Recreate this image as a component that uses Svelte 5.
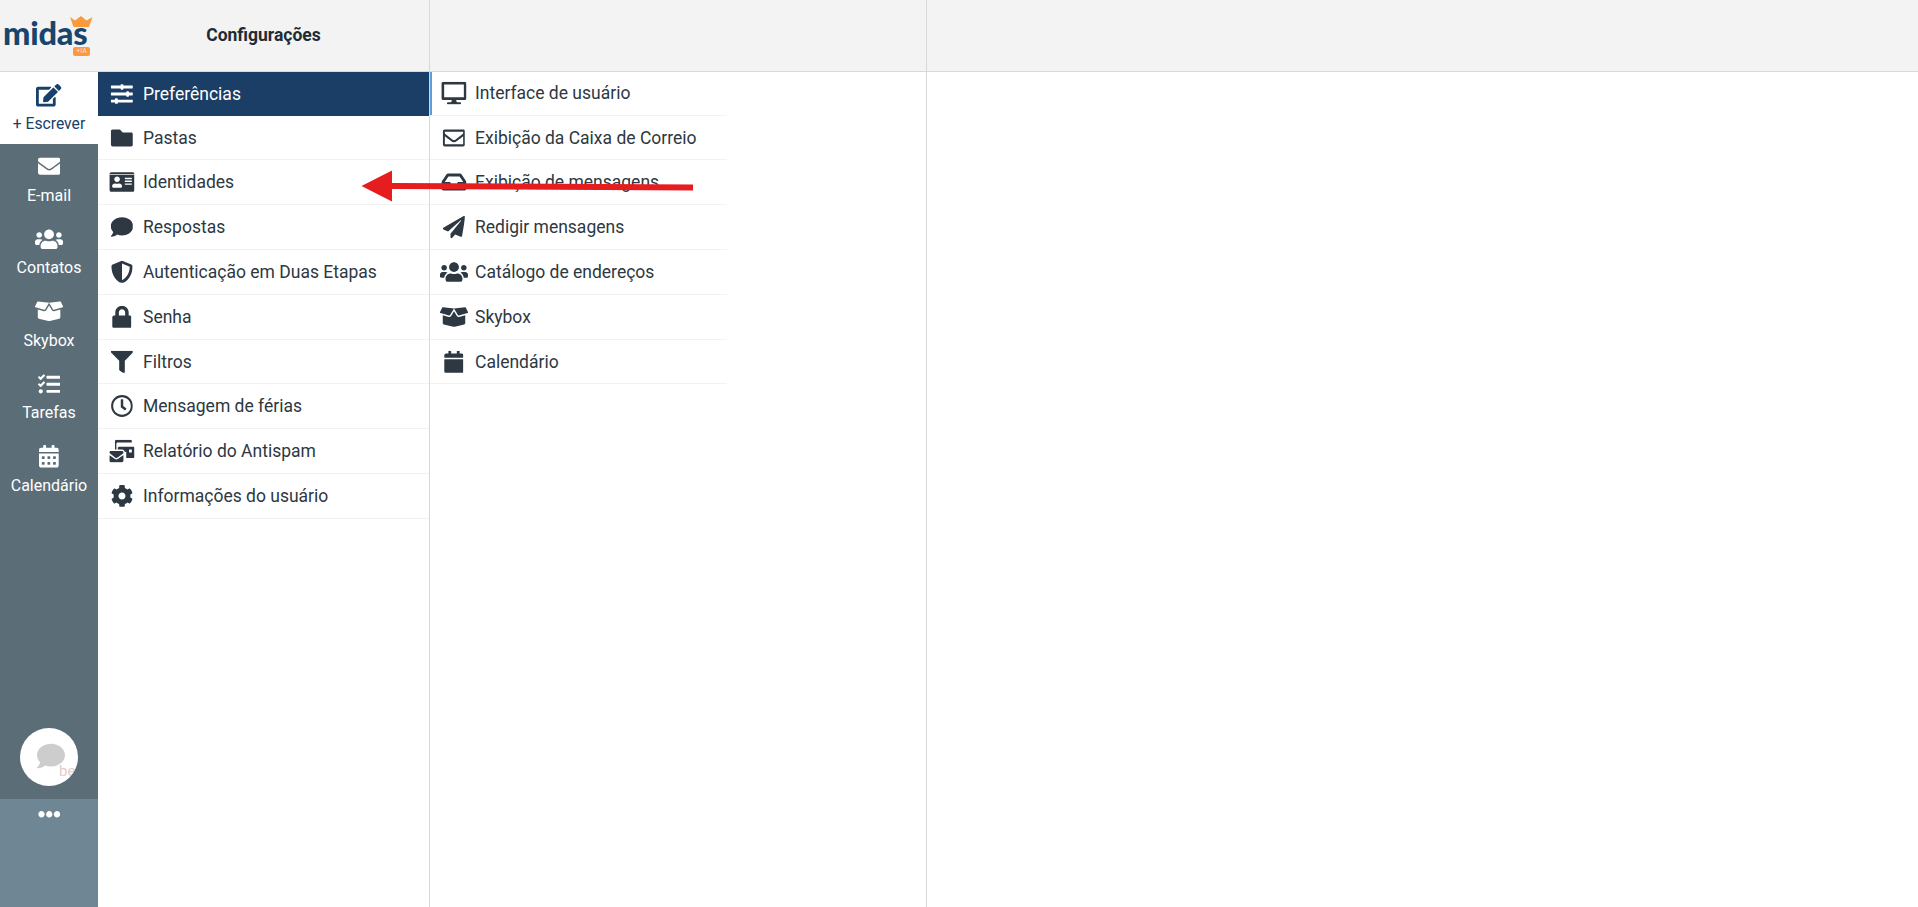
<script>
  const P = {
    sliders: [512, "M496 384H160v-16c0-8.8-7.2-16-16-16h-32c-8.800 0-16 7.200-16 16v16H16c-8.800 0-16 7.200-16 16v32c0 8.800 7.200 16 16 16h80v16c0 8.800 7.200 16 16 16h32c8.800 0 16-7.200 16-16v-16h336c8.800 0 16-7.200 16-16v-32c0-8.800-7.200-16-16-16zm0-160h-80v-16c0-8.800-7.200-16-16-16h-32c-8.800 0-16 7.200-16 16v16H16c-8.800 0-16 7.200-16 16v32c0 8.800 7.200 16 16 16h336v16c0 8.800 7.200 16 16 16h32c8.800 0 16-7.200 16-16v-16h80c8.800 0 16-7.200 16-16v-32c0-8.800-7.200-16-16-16zm0-160H288V48c0-8.800-7.200-16-16-16h-32c-8.800 0-16 7.200-16 16v16H16C7.200 64 0 71.200 0 80v32c0 8.800 7.200 16 16 16h208v16c0 8.800 7.200 16 16 16h32c8.800 0 16-7.200 16-16v-16h208c8.800 0 16-7.200 16-16V80c0-8.800-7.200-16-16-16z"],
    folder: [512, "M464 128H272l-64-64H48C21.490 64 0 85.490 0 112v288c0 26.510 21.490 48 48 48h416c26.510 0 48-21.490 48-48V176c0-26.510-21.490-48-48-48z"],
    idcard: [576, "M528 32H48C21.500 32 0 53.500 0 80v352c0 26.500 21.500 48 48 48h480c26.500 0 48-21.500 48-48V80c0-26.500-21.500-48-48-48zm-352 96c35.300 0 64 28.700 64 64s-28.700 64-64 64-64-28.700-64-64 28.700-64 64-64zm112 236.800c0 10.600-10 19.200-22.400 19.200H86.400C74 384 64 375.400 64 364.800v-19.200c0-31.800 30.100-57.600 67.200-57.600h5c12.300 5.100 25.700 8 39.800 8s27.600-2.900 39.800-8h5c37.100 0 67.200 25.800 67.200 57.600v19.200zM512 312c0 4.400-3.600 8-8 8H360c-4.400 0-8-3.600-8-8v-16c0-4.400 3.600-8 8-8h144c4.400 0 8 3.600 8 8v16zm0-64c0 4.400-3.600 8-8 8H360c-4.400 0-8-3.600-8-8v-16c0-4.400 3.600-8 8-8h144c4.400 0 8 3.600 8 8v16zm0-64c0 4.400-3.600 8-8 8H360c-4.400 0-8-3.600-8-8v-16c0-4.400 3.600-8 8-8h144c4.400 0 8 3.600 8 8v16z"],
    comment: [512, "M256 32C114.600 32 0 125.100 0 240c0 49.600 21.400 95 57 130.700C44.500 421.100 2.700 466 2.200 466.500c-2.200 2.300-2.800 5.700-1.500 8.700S4.800 480 8 480c66.300 0 116-31.800 140.600-51.400 32.700 12.300 69 19.400 107.400 19.400 141.400 0 256-93.100 256-208S397.400 32 256 32z"],
    shield: [512, "M466.500 83.700l-192-80a48.150 48.150 0 0 0-36.900 0l-192 80C27.700 91.100 16 108.600 16 128c0 198.500 114.500 335.700 221.500 380.300 11.800 4.900 25.100 4.900 36.900 0C360.100 472.600 496 349.300 496 128c0-19.400-11.700-36.900-29.500-44.300zM256.100 446.300l-.1-381 175.900 73.300c-3.300 151.400-82.100 261.100-175.800 307.700z"],
    lock: [448, "M400 224h-24v-72C376 68.200 307.800 0 224 0S72 68.200 72 152v72H48c-26.500 0-48 21.500-48 48v192c0 26.500 21.500 48 48 48h352c26.500 0 48-21.500 48-48V272c0-26.500-21.500-48-48-48zm-104 0H152v-72c0-39.700 32.300-72 72-72s72 32.300 72 72v72z"],
    filter: [512, "M487.976 0H24.028C2.710 0-8.047 25.866 7.058 40.971L192 225.941V432c0 7.831 3.821 15.170 10.237 19.662l80 55.980C298.020 518.690 320 507.493 320 487.980V225.941l184.947-184.970C520.021 25.896 509.338 0 487.976 0z"],
    clock: [512, "M256 8C119 8 8 119 8 256s111 248 248 248 248-111 248-248S393 8 256 8zm0 448c-110.500 0-200-89.500-200-200S145.500 56 256 56s200 89.500 200 200-89.500 200-200 200zm61.800-104.400l-84.900-61.700c-3.100-2.300-4.900-5.900-4.900-9.700V116c0-6.600 5.400-12 12-12h32c6.600 0 12 5.400 12 12v141.700l66.800 48.600c5.400 3.900 6.500 11.400 2.600 16.800L334.600 349c-3.900 5.300-11.400 6.500-16.800 2.600z"],
    mail: [576, "M160 448c-25.600 0-51.200-22.400-64-32-64-44.800-83.200-60.800-96-70.400V480c0 17.700 14.300 32 32 32h256c17.700 0 32-14.300 32-32V345.600c-12.800 9.600-32 25.600-96 70.400-12.800 9.600-38.400 32-64 32zm128-192H32c-17.700 0-32 14.300-32 32v16c25.600 19.200 22.400 19.200 115.200 86.400 9.600 6.400 28.800 25.600 44.800 25.600s35.200-19.200 44.800-22.400c92.800-67.200 89.600-67.200 115.200-86.400V288c0-17.700-14.300-32-32-32zm256-96H224c-17.700 0-32 14.300-32 32v32h96c33.300 0 60.700 25.700 63.700 58.300L384 269.800V416h160c17.700 0 32-14.300 32-32V192c0-17.700-14.300-32-32-32zm-32 128h-64v-64h64v64zM160 96c0-17.700 14.300-32 32-32h320V32c0-17.700-14.300-32-32-32H160c-17.700 0-32 14.300-32 32v192h32V96z"],
    cog: [512, "M487.400 315.700l-42.600-24.600c4.300-23.200 4.300-47 0-70.200l42.600-24.600c4.900-2.800 7.100-8.600 5.500-14-11.100-35.600-30-67.800-54.700-94.600-3.800-4.100-10-5.100-14.800-2.300L380.800 110c-17.900-15.400-38.500-27.300-60.800-35.100V25.800c0-5.600-3.900-10.500-9.400-11.700-36.700-8.200-74.300-7.800-109.200 0-5.500 1.200-9.400 6.100-9.400 11.700V75c-22.200 7.900-42.800 19.800-60.800 35.100L88.700 85.500c-4.900-2.800-11-1.900-14.800 2.300-24.700 26.700-43.600 58.900-54.700 94.600-1.700 5.400.6 11.200 5.500 14L67.300 221c-4.300 23.200-4.300 47 0 70.200l-42.600 24.600c-4.900 2.800-7.100 8.600-5.500 14 11.100 35.600 30 67.800 54.700 94.600 3.800 4.100 10 5.100 14.800 2.300l42.600-24.600c17.900 15.400 38.500 27.300 60.800 35.100v49.200c0 5.600 3.900 10.500 9.400 11.700 36.700 8.200 74.300 7.800 109.200 0 5.500-1.200 9.400-6.100 9.400-11.700v-49.200c22.200-7.900 42.800-19.800 60.800-35.100l42.600 24.600c4.900 2.800 11 1.900 14.800-2.300 24.700-26.700 43.600-58.900 54.700-94.600 1.500-5.500-.7-11.300-5.600-14.100zM256 336c-44.100 0-80-35.900-80-80s35.900-80 80-80 80 35.900 80 80-35.900 80-80 80z"],
    desktop: [576, "M528 0H48C21.500 0 0 21.500 0 48v320c0 26.500 21.500 48 48 48h192l-16 48h-72c-13.300 0-24 10.700-24 24s10.700 24 24 24h272c13.300 0 24-10.700 24-24s-10.700-24-24-24h-72l-16-48h192c26.500 0 48-21.500 48-48V48c0-26.500-21.500-48-48-48zm-16 352H64V64h448v288z"],
    envO: [512, "M464 64H48C21.490 64 0 85.490 0 112v288c0 26.510 21.490 48 48 48h416c26.510 0 48-21.490 48-48V112c0-26.510-21.490-48-48-48zm0 48v40.805c-22.422 18.259-58.168 46.651-134.587 106.490-16.841 13.247-50.201 45.072-73.413 44.701-23.208.375-56.579-31.459-73.413-44.701C106.180 199.465 70.425 171.067 48 152.805V112h416zM48 400V214.398c22.914 18.251 55.409 43.862 104.938 82.646 21.857 17.205 60.134 55.186 103.062 54.955 42.717.231 80.509-37.199 103.053-54.947 49.528-38.783 82.032-64.401 104.947-82.653V400H48z"],
    env: [512, "M502.300 190.800c3.900-3.100 9.700-.2 9.700 4.700V400c0 26.500-21.500 48-48 48H48c-26.500 0-48-21.500-48-48V195.600c0-5 5.700-7.800 9.700-4.700 22.400 17.400 52.100 39.500 154.100 113.600 21.100 15.400 56.700 47.800 92.200 47.600 35.700.3 72-32.800 92.300-47.600 102-74.100 131.600-96.300 154-113.700zM256 320c23.200.4 56.600-29.200 73.400-41.400 132.700-96.300 142.800-104.700 173.400-128.700 5.800-4.500 9.200-11.500 9.200-18.900v-19c0-26.500-21.500-48-48-48H48C21.500 64 0 85.500 0 112v19c0 7.400 3.400 14.300 9.200 18.900 30.600 23.900 40.700 32.400 173.400 128.700 16.800 12.200 50.200 41.800 73.400 41.400z"],
    inbox: [576, "M567.938 243.908L462.250 85.374A48.003 48.003 0 0 0 422.311 64H153.689a48 48 0 0 0-39.938 21.374L8.062 243.908A47.994 47.994 0 0 0 0 270.533V400c0 26.510 21.490 48 48 48h480c26.510 0 48-21.490 48-48V270.533a47.994 47.994 0 0 0-8.062-26.625zM162.252 128h251.497l85.333 128H376l-32 64H232l-32-64H76.918l85.334-128z"],
    plane: [512, "M476 3.200L12.500 270.600c-18.100 10.400-15.800 35.600 2.200 43.200L121 358.400l287.300-253.200c5.500-4.900 13.300 2.600 8.600 8.300L176 407v80.500c0 23.600 28.500 32.900 42.500 15.800L282 426l124.600 52.200c14.200 6 30.400-2.900 33-18.200l72-432C515 7.800 493.300-6.800 476 3.200z"],
    users: [640, "M96 224c35.300 0 64-28.700 64-64s-28.700-64-64-64-64 28.700-64 64 28.700 64 64 64zm448 0c35.300 0 64-28.700 64-64s-28.700-64-64-64-64 28.700-64 64 28.700 64 64 64zm32 32h-64c-17.600 0-33.500 7.100-45.100 18.600 40.300 22.100 68.900 62 75.100 109.400h66c17.700 0 32-14.300 32-32v-32c0-35.300-28.700-64-64-64zm-256 0c61.900 0 112-50.100 112-112S381.900 32 320 32 208 82.100 208 144s50.100 112 112 112zm76.800 32h-8.300c-20.800 10-43.900 16-68.500 16s-47.600-6-68.500-16h-8.300C179.600 288 128 339.600 128 403.200V432c0 26.500 21.500 48 48 48h288c26.500 0 48-21.500 48-48v-28.800c0-63.600-51.600-115.200-115.200-115.200zm-223.700-13.400C161.500 263.100 145.600 256 128 256H64c-35.300 0-64 28.700-64 64v32c0 17.700 14.300 32 32 32h65.900c6.300-47.400 34.900-87.300 75.200-109.400z"],
    box: [640, "M425.700 256c-16.900 0-32.800-9-41.400-23.400L320 126l-64.200 106.600c-8.700 14.500-24.600 23.500-41.500 23.500-4.500 0-9-.6-13.300-1.900L64 215v178c0 14.700 10 27.500 24.200 31l216.200 54.100c10.200 2.500 20.900 2.500 31 0L551.800 424c14.200-3.600 24.200-16.400 24.200-31V215l-137 39.100c-4.300 1.300-8.800 1.900-13.300 1.900zm212.600-112.200L586.800 41c-3.100-6.200-9.800-9.800-16.700-8.900L320 64l91.700 152.100c3.800 6.300 11.400 9.300 18.500 7.300l197.900-56.500c9.900-2.900 14.700-13.900 10.200-23.100zM53.200 41L1.700 143.800c-4.600 9.200.3 20.200 10.100 23l197.900 56.500c7.100 2 14.700-1 18.500-7.300L320 64 69.800 32.100c-6.900-.8-13.500 2.700-16.600 8.900z"],
    cal: [448, "M12 192h424c6.600 0 12 5.400 12 12v260c0 26.500-21.500 48-48 48H48c-26.500 0-48-21.500-48-48V204c0-6.600 5.400-12 12-12zm436-44v-36c0-26.500-21.500-48-48-48h-48V12c0-6.600-5.400-12-12-12h-40c-6.600 0-12 5.400-12 12v52H160V12c0-6.600-5.400-12-12-12h-40c-6.600 0-12 5.400-12 12v52H48C21.500 64 0 85.500 0 112v36c0 6.600 5.400 12 12 12h424c6.600 0 12-5.400 12-12z"],
    calAlt: [448, "M0 464c0 26.500 21.500 48 48 48h352c26.500 0 48-21.500 48-48V192H0v272zm320-196c0-6.600 5.400-12 12-12h40c6.600 0 12 5.400 12 12v40c0 6.600-5.400 12-12 12h-40c-6.600 0-12-5.400-12-12v-40zm0 128c0-6.600 5.400-12 12-12h40c6.600 0 12 5.400 12 12v40c0 6.600-5.400 12-12 12h-40c-6.600 0-12-5.400-12-12v-40zM192 268c0-6.600 5.400-12 12-12h40c6.600 0 12 5.400 12 12v40c0 6.600-5.400 12-12 12h-40c-6.600 0-12-5.400-12-12v-40zm0 128c0-6.600 5.400-12 12-12h40c6.600 0 12 5.400 12 12v40c0 6.600-5.400 12-12 12h-40c-6.600 0-12-5.400-12-12v-40zM64 268c0-6.600 5.400-12 12-12h40c6.600 0 12 5.400 12 12v40c0 6.600-5.400 12-12 12H76c-6.600 0-12-5.400-12-12v-40zm0 128c0-6.600 5.400-12 12-12h40c6.600 0 12 5.400 12 12v40c0 6.600-5.400 12-12 12H76c-6.600 0-12-5.400-12-12v-40zM400 64h-48V16c0-8.800-7.200-16-16-16h-32c-8.800 0-16 7.200-16 16v48H160V16c0-8.800-7.200-16-16-16h-32c-8.800 0-16 7.200-16 16v48H48C21.500 64 0 85.500 0 112v48h448v-48c0-26.500-21.500-48-48-48z"],
    edit: [576, "M402.600 83.200l90.200 90.200c3.800 3.800 3.800 10 0 13.800L274.400 405.600l-92.800 10.300c-12.400 1.400-22.900-9.100-21.500-21.500l10.300-92.800L388.800 83.200c3.800-3.800 10-3.800 13.800 0zm162-22.900l-48.800-48.800c-15.200-15.200-39.900-15.200-55.200 0l-35.400 35.400c-3.800 3.800-3.800 10 0 13.800l90.200 90.200c3.800 3.800 10 3.800 13.800 0l35.400-35.400c15.200-15.300 15.200-40 0-55.200zM384 346.200V448H64V128h229.800c3.200 0 6.200-1.300 8.500-3.500l40-40c7.600-7.600 2.200-20.500-8.500-20.500H48C21.500 64 0 85.500 0 112v352c0 26.500 21.500 48 48 48h352c26.500 0 48-21.500 48-48V306.200c0-10.700-12.900-16-20.500-8.500l-40 40c-2.200 2.300-3.500 5.300-3.500 8.500z"],
    tasks: [512, "M139.610 35.500a12 12 0 0 0-17 0L58.930 98.810l-22.700-22.120a12 12 0 0 0-17 0L3.530 92.410a12 12 0 0 0 0 17l47.590 47.400a12.780 12.780 0 0 0 17.610 0l15.590-15.620L156.520 69a12.090 12.090 0 0 0 .09-17zm0 159.190a12 12 0 0 0-17 0l-63.680 63.720-22.700-22.100a12 12 0 0 0-17 0L3.530 252a12 12 0 0 0 0 17L51 316.500a12.770 12.770 0 0 0 17.600 0l15.700-15.690 72.200-72.220a12 12 0 0 0 .09-16.900zM64 368c-26.490 0-48.590 21.500-48.590 48S37.530 464 64 464a48 48 0 0 0 0-96zm432 16H208a16 16 0 0 0-16 16v32a16 16 0 0 0 16 16h288a16 16 0 0 0 16-16v-32a16 16 0 0 0-16-16zm0-320H208a16 16 0 0 0-16 16v32a16 16 0 0 0 16 16h288a16 16 0 0 0 16-16V80a16 16 0 0 0-16-16zm0 160H208a16 16 0 0 0-16 16v32a16 16 0 0 0 16 16h288a16 16 0 0 0 16-16v-32a16 16 0 0 0-16-16z"],
    dots: [512, "M328 256c0 39.800-32.200 72-72 72s-72-32.200-72-72 32.200-72 72-72 72 32.200 72 72zm104-72c-39.800 0-72 32.200-72 72s32.200 72 72 72 72-32.200 72-72-32.200-72-72-72zm-352 0c-39.800 0-72 32.200-72 72s32.200 72 72 72 72-32.200 72-72-32.200-72-72-72z"]
  };
  const side = [["env","E-mail"],["users","Contatos"],["box","Skybox"],["tasks","Tarefas"],["calAlt","Calendário"]];
  const col2 = [["sliders","Preferências"],["folder","Pastas"],["idcard","Identidades"],["comment","Respostas"],["shield","Autenticação em Duas Etapas"],["lock","Senha"],["filter","Filtros"],["clock","Mensagem de férias"],["mail","Relatório do Antispam"],["cog","Informações do usuário"]];
  const col3 = [["desktop","Interface de usuário"],["envO","Exibição da Caixa de Correio"],["inbox","Exibição de mensagens"],["plane","Redigir mensagens"],["users","Catálogo de endereços"],["box","Skybox"],["cal","Calendário"]];
</script>

{#snippet icon(n)}
  <svg class="ic" viewBox="0 0 {P[n][0]} 512" style="width:{P[n][0] / 512 * 22.5}px"><path d={P[n][1]} />{#if n === "idcard"}<rect x="0" y="80" width="576" height="16" fill="#fff" />{/if}</svg>
{/snippet}

<div class="page">
  <header class="top">
    <div class="logo">
      <span class="word">midas</span>
      <svg class="crown" viewBox="0 0 24 12"><path d="M1 1l5 3.500L12 0l5.500 4.500L23.500 1 20 11H4.500z" fill="#fb9a3c" /></svg>
      <span class="tag">+IA</span>
    </div>
    <div class="title">Configurações</div>
    <div class="hcol"></div>
    <div class="hrest"></div>
  </header>
  <div class="main">
    <nav class="side">
      <div class="compose">
        <svg class="ic" viewBox="0 0 576 512" style="width:25.300px"><path d={P.edit[1]} /></svg>
        <span>+ Escrever</span>
      </div>
      <div class="dark">
        {#each side as [n, t]}
          <div class="sitem">{@render icon(n)}<span>{t}</span></div>
        {/each}
        <div class="spacer"></div>
        <div class="chat">
          <svg viewBox="0 0 512 512"><path d={P.comment[1]} /></svg>
          <span>bet</span>
        </div>
      </div>
      <div class="more">{@render icon("dots")}</div>
    </nav>
    <section class="col2">
      {#each col2 as [n, t], i}
        <div class="row" class:active={i === 0}>{@render icon(n)}<span>{t}</span></div>
      {/each}
    </section>
    <section class="col3">
      {#each col3 as [n, t], i}
        <div class="row" class:cur={i === 0}>{@render icon(n)}<span>{t}</span></div>
      {/each}
    </section>
    <div class="rest"></div>
  </div>
  <svg class="arrow" viewBox="0 0 340 34"><path d="M0.500 16 L31 .5 V13 L332 14.500 V20.500 L31 19 V31.500z" fill="#e61c1f" /></svg>
</div>

<style>
  :global(body) { margin: 0; background: #fff; }
  .page { position: relative; height: 907px; overflow: hidden; display: flex; flex-direction: column; font-family: Roboto, sans-serif; color: #2d3842; }
  .top { height: 72px; box-sizing: border-box; display: flex; background: #f3f3f3; border-bottom: 1px solid #d8d8d8; flex: none; }
  .logo { position: relative; width: 98px; flex: none; }
  .word { position: absolute; left: 3px; top: 20px; font: 900 32.5px/26px Lato, sans-serif; color: #17456b; letter-spacing: -.2px; }
  .crown { position: absolute; left: 69px; top: 16px; width: 24px; height: 12px; }
  .tag { position: absolute; left: 73px; top: 47px; width: 17px; height: 9px; background: #fb9a3c; border-radius: 2px; color: #fde; font-size: 7px; line-height: 9px; text-align: center; }
  .title { width: 332px; flex: none; box-sizing: border-box; border-right: 1px solid #d8d8d8; display: flex; align-items: center; justify-content: center; font-weight: 700; font-size: 17.500px; color: #212b33; padding-bottom: 1px; }
  .hcol { width: 496px; flex: none; border-right: 1px solid #d8d8d8; }
  .hrest { flex: 1; }
  .main { flex: 1; display: flex; min-height: 0; }
  .side { width: 98px; flex: none; display: flex; flex-direction: column; font-size: 16px; }
  .ic { height: 22.5px; fill: currentColor; flex: none; display: block; }
  .compose { height: 72px; flex: none; display: flex; flex-direction: column; align-items: center; color: #17406a; padding-top: 12px; box-sizing: border-box; gap: 7px; font-size: 15.700px; }
  .dark { flex: 1; background: #5b6e78; display: flex; flex-direction: column; color: #fff; padding-top: 11px; }
  .sitem { height: 72.500px; flex: none; display: flex; flex-direction: column; align-items: center; box-sizing: border-box; gap: 8px; }
  .spacer { flex: 1; }
  .chat { position: relative; width: 58px; height: 58px; border-radius: 50%; background: #fff; margin: 0 auto 13px; overflow: hidden; flex: none; }
  .chat svg { position: absolute; left: 17px; top: 14px; width: 28px; height: 28px; fill: #cdcdcd; }
  .chat span { position: absolute; left: 39px; top: 34px; color: #e8caca; font-size: 15px; }
  .more { height: 108px; flex: none; background: #6f8794; color: #fff; display: flex; justify-content: center; padding-top: 4px; box-sizing: border-box; }
  .col2 { width: 332px; flex: none; box-sizing: border-box; border-right: 1px solid #d8d8d8; }
  .col3 { width: 297px; flex: none; }
  .rest { margin-left: 199px; border-left: 1px solid #d8d8d8; flex: 1; }
  .row { height: 44.800px; box-sizing: border-box; display: flex; align-items: center; border-bottom: 1px solid #f2f2f2; font-size: 17.500px; position: relative; }
  .row .ic { position: absolute; left: 23.500px; top: 50%; transform: translate(-50%, -50%); }
  .row span { margin-left: 45px; white-space: nowrap; }
  .active { background: #1a3e66; color: #fff; height: 43.700px; border-bottom: 0; }
  .cur { box-shadow: inset 2px 0 0 #5a9fdc; height: 43.700px; }
  .arrow { position: absolute; left: 361px; top: 170px; width: 340px; height: 34px; }
</style>
